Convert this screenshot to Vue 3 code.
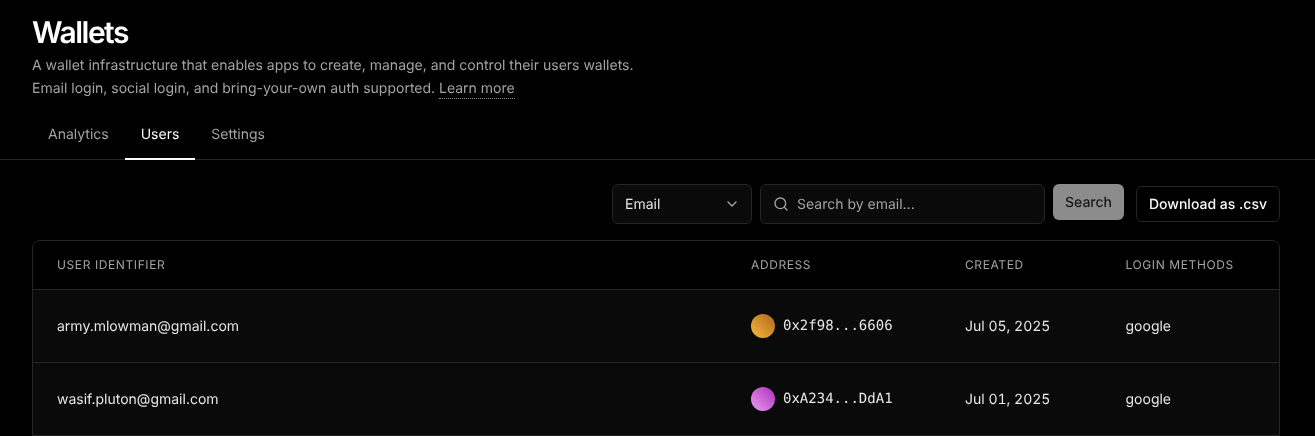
<script setup>
const tabs = [
  { label: 'Analytics', active: false },
  { label: 'Users', active: true },
  { label: 'Settings', active: false },
]
const columns = ['User Identifier', 'Address', 'Created', 'Login Methods']
const rows = [
  { email: 'army.mlowman@gmail.com', address: '0x2f98...6606', tone: 'orange', created: 'Jul 05, 2025', login: 'google' },
  { email: 'wasif.pluton@gmail.com', address: '0xA234...DdA1', tone: 'purple', created: 'Jul 01, 2025', login: 'google' },
]
</script>

<template>
  <div class="page">
    <header class="head">
      <h1 class="title">Wallets</h1>
      <p class="desc">A wallet infrastructure that enables apps to create, manage, and control their users wallets.<br />Email login, social login, and bring-your-own auth supported. <a class="more">Learn more</a></p>
    </header>
    <nav class="tabs">
      <a v-for="t in tabs" :key="t.label" class="tab" :class="{ active: t.active }">{{ t.label }}</a>
    </nav>
    <main class="body">
      <div class="toolbar">
        <div class="select">
          <span>Email</span>
          <svg width="16" height="16" viewBox="0 0 24 24" fill="none" stroke="#a3a3a3" stroke-width="2" stroke-linecap="round" stroke-linejoin="round"><path d="m6 9 6 6 6-6" /></svg>
        </div>
        <div class="search">
          <svg width="16" height="16" viewBox="0 0 24 24" fill="none" stroke="#a3a3a3" stroke-width="2" stroke-linecap="round" stroke-linejoin="round"><circle cx="11" cy="11" r="8" /><path d="m21 21-4.3-4.3" /></svg>
          <span>Search by email...</span>
        </div>
        <button class="btn-search">Search</button>
        <button class="btn-dl">Download as .csv</button>
      </div>
      <div class="table-wrap">
        <table>
          <colgroup>
            <col class="c1" /><col class="c2" /><col class="c3" /><col class="c4" />
          </colgroup>
          <thead>
            <tr><th v-for="c in columns" :key="c">{{ c }}</th></tr>
          </thead>
          <tbody>
            <tr v-for="r in rows" :key="r.email">
              <td class="txt">{{ r.email }}</td>
              <td>
                <div class="addr">
                  <span class="dot" :class="r.tone"></span>
                  <span class="mono">{{ r.address }}</span>
                </div>
              </td>
              <td class="txt date">{{ r.created }}</td>
              <td class="txt">{{ r.login }}</td>
            </tr>
          </tbody>
        </table>
      </div>
    </main>
  </div>
</template>

<style>
html, body { background: #000; margin: 0; overflow: hidden; }
</style>

<style scoped>
.page {
  height: 436px;
  overflow: hidden;
  background: #000;
  color: #fafafa;
  font-family: Inter, "Liberation Sans", sans-serif;
  text-rendering: geometricPrecision;
  will-change: transform;
}
.head { padding: 15px 32px 0; }
.title {
  margin: 0;
  font-size: 30px;
  line-height: 36px;
  font-weight: 600;
  letter-spacing: -1.5px;
  color: #fff;
}
.desc {
  margin: 3px 0 0;
  font-size: 14px;
  line-height: 23px;
  color: #a3a3a3;
}
.more {
  color: #a3a3a3;
  padding-bottom: 1px;
  border-bottom: 1px dotted #8a8a8a;
}
.tabs {
  display: flex;
  margin-top: 11px;
  padding: 0 32px;
  border-bottom: 1px solid #262626;
}
.tab {
  padding: 0 16px;
  height: 49px;
  line-height: 47px;
  box-sizing: border-box;
  font-size: 14px;
  color: #a3a3a3;
  margin-bottom: -1px;
  border-bottom: 2px solid transparent;
}
.tab.active {
  color: #fafafa;
  border-bottom-color: #fafafa;
}
.body { padding: 24px 35px 0 32px; }
.toolbar {
  display: flex;
  justify-content: flex-end;
  align-items: flex-start;
}
.select, .search {
  height: 40px;
  box-sizing: border-box;
  border: 1px solid #262626;
  border-radius: 6px;
  background: #0a0a0a;
  display: flex;
  align-items: center;
  font-size: 14px;
}
.select {
  width: 140px;
  padding: 0 11px 0 12px;
  justify-content: space-between;
  margin-right: 8px;
  color: #e5e5e5;
}
.search {
  width: 285px;
  padding: 0 12px;
  gap: 8px;
  margin-right: 8px;
  color: #a3a3a3;
}
.btn-search, .btn-dl {
  font-family: inherit;
  font-size: 14px;
  box-sizing: border-box;
  border-radius: 6px;
  padding: 0;
  text-rendering: geometricPrecision;
}
.btn-search {
  width: 71px;
  height: 36px;
  border: 0;
  background: #8c8c8c;
  color: #171717;
  font-weight: 500;
  margin-right: 12px;
}
.btn-dl {
  width: 144px;
  height: 36px;
  margin-top: 2px;
  border: 1px solid #262626;
  background: #000;
  color: #fafafa;
  font-weight: 500;
}
.table-wrap {
  margin-top: 16px;
  border: 1px solid #262626;
  border-radius: 8px 8px 0 0;
  overflow: hidden;
}
table {
  width: 100%;
  border-collapse: collapse;
  table-layout: fixed;
}
.c1 { width: 694px; }
.c2 { width: 214px; }
.c3 { width: 160.5px; }
th {
  height: 48px;
  padding: 0 24px;
  box-sizing: border-box;
  text-align: left;
  font-size: 12px;
  font-weight: 400;
  letter-spacing: 0.6px;
  text-transform: uppercase;
  color: #a3a3a3;
  background: #000;
}
td {
  height: 73px;
  box-sizing: border-box;
  padding: 0 24px;
  font-size: 14px;
  color: #e5e5e5;
  background: #0a0a0a;
  border-top: 1px solid #262626;
}
td.txt { padding-top: 1px; }
.date { font-variant-numeric: tabular-nums; }
.addr { display: flex; align-items: center; gap: 8px; }
.dot { width: 24px; height: 24px; border-radius: 50%; flex: none; }
.dot.orange { background: linear-gradient(45deg, #f6bc3e, #b0641a); }
.dot.purple { background: linear-gradient(45deg, #eb9bec, #ad30c0); }
.mono { font-family: "DejaVu Sans Mono", monospace; font-size: 14px; padding-top: 1px; }
</style>
